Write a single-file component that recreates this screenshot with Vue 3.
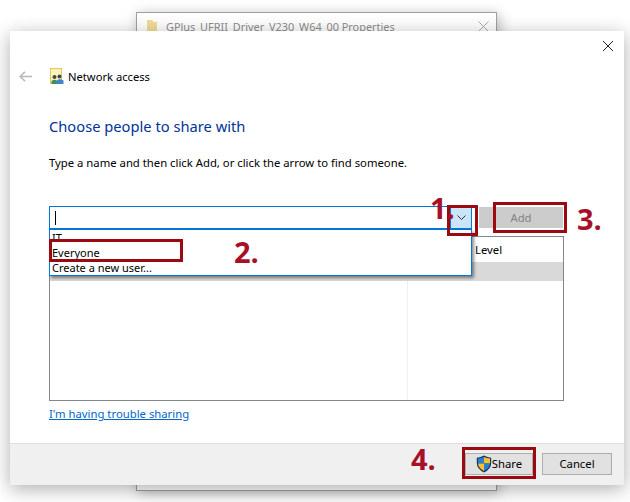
<script setup>
const items = ['IT', 'Everyone', 'Create a new user...']
</script>

<template>
  <div class="desk">
    <div class="backwin">
      <svg class="folder" width="11" height="12" viewBox="0 0 11 12"><path d="M0 0h5l2 2h3v10H0z" fill="#f3dc98"/></svg>
      <span class="backtitle">GPlus_UFRII_Driver_V230_W64_00 Properties</span>
      <svg class="backx" width="11" height="11" viewBox="0 0 11 11"><path d="M.5.5l10 10M10.500.5l-10 10" stroke="#a9a9a9" fill="none"/></svg>
    </div>

    <div class="dialog">
      <div class="closerow">
        <svg width="10" height="10" viewBox="0 0 10 10"><path d="M0 0l10 10M10 0L0 10" stroke="#222" stroke-width="1" fill="none"/></svg>
      </div>
      <div class="content">
        <div class="navrow">
          <svg class="arrow" width="13" height="11" viewBox="0 0 13 11"><path d="M6 .8L1.200 5.500 6 10.200M1.200 5.500H13" stroke="#b9b9b9" stroke-width="1.6" fill="none"/></svg>
          <svg class="netico" width="14" height="16" viewBox="0 0 14 16">
            <rect x=".5" y=".5" width="11" height="15" fill="#fdf3c0" stroke="#e8c84e"/>
            <circle cx="4.500" cy="9" r="2" fill="#4a4a3a"/>
            <circle cx="9.500" cy="8.500" r="2" fill="#3a4a5a"/>
            <path d="M1.500 16v-3q3-2.500 5.500 0V16z" fill="#3f8f5f"/>
            <path d="M6.500 16v-3.500q3.500-2.500 7 0V16z" fill="#3f86c6"/>
          </svg>
          <span class="navtitle">Network access</span>
        </div>
        <h1 class="heading">Choose people to share with</h1>
        <p class="desc">Type a name and then click Add, or click the arrow to find someone.</p>

        <div class="inputrow">
          <div class="combo">
            <div class="field"><i class="caret"></i></div>
            <div class="drop">
              <svg width="9" height="5" viewBox="0 0 9 5"><path d="M.5.500l4 4 4-4" stroke="#333" fill="none"/></svg>
            </div>
            <ul class="menu">
              <li v-for="item in items" :key="item">{{ item }}</li>
            </ul>
          </div>
          <div class="addbtn">Add</div>
        </div>

        <div class="listbox">
          <div class="lhead">
            <div class="colname"></div>
            <div class="collevel">Level</div>
          </div>
          <div class="lrow"></div>
          <div class="lbody"><div class="colname"></div></div>
        </div>

        <a class="trouble">I'm having trouble sharing</a>
      </div>
      <div class="footer">
        <button class="btn share">
          <svg width="16" height="18" viewBox="0 0 16 18">
            <path d="M8 .5q3.500 2 7.200 2.200V8q0 6-7.200 9.500Q.8 14 .8 8V2.700Q4.500 2.500 8 .5z" fill="#17395f"/>
            <path d="M8 2v6.500H2V3.500Q5.500 3.200 8 2z" fill="#2c7fd0"/>
            <path d="M8 2q2.500 1.200 6 1.500v5H8z" fill="#f5c12e"/>
            <path d="M2 8.500h6V16q-5.500-3-6-7.500z" fill="#f5c12e"/>
            <path d="M8 8.500h6q-.5 4.500-6 7.500z" fill="#2c7fd0"/>
          </svg>
          <span>Share</span>
        </button>
        <button class="btn">Cancel</button>
      </div>
    </div>

    <div class="mark m1"></div>
    <div class="mark m2"></div>
    <div class="mark m3"></div>
    <div class="mark m4"></div>
    <span class="num n1">1.</span>
    <span class="num n2">2.</span>
    <span class="num n3">3.</span>
    <span class="num n4">4.</span>
  </div>
</template>

<style>
html, body { margin: 0; background: #fff; }
</style>

<style scoped>
.desk {
  position: relative;
  width: 630px;
  height: 502px;
  overflow: hidden;
  background: #fff;
  font-family: "Noto Sans", "Open Sans", sans-serif;
  font-size: 11.3px;
  color: #000;
}
.backwin {
  position: absolute;
  left: 136px;
  top: 12px;
  width: 361px;
  height: 479px;
  box-sizing: border-box;
  border: 1px solid #a0a0a0;
  background: #fff;
  box-shadow: 2px 2px 12px rgba(0, 0, 0, .28);
}
.folder { position: absolute; left: 10px; top: 7px; }
.backtitle {
  position: absolute;
  left: 29px;
  top: 6px;
  font-size: 10.9px;
  color: #8d8d8d;
  white-space: nowrap;
}
.backx { position: absolute; left: 341px; top: 8px; }

.dialog {
  position: absolute;
  left: 10px;
  top: 31px;
  width: 614px;
  height: 454px;
  background: #fff;
  display: flex;
  flex-direction: column;
  box-shadow: 0 4px 18px rgba(0, 0, 0, .32);
}
.closerow {
  height: 10px;
  padding: 10px 11px 0 0;
  display: flex;
  justify-content: flex-end;
}
.content {
  flex: 1;
  padding: 0 60px 0 9px;
  position: relative;
}
.navrow {
  display: flex;
  align-items: center;
  height: 16px;
  margin-top: 17px;
}
.arrow { margin-right: 18px; }
.netico { margin-right: 5px; }
.navtitle { font-size: 11.2px; margin-left: -1px; }
.heading {
  margin: 32px 0 0 30px;
  font-size: 14.7px;
  line-height: 20px;
  font-weight: 400;
  color: #003399;
}
.desc {
  margin: 19px 0 0 30px;
  line-height: 16px;
  white-space: nowrap;
}
.inputrow {
  display: flex;
  margin: 35px 0 0 30px;
  height: 24px;
}
.combo {
  position: relative;
  display: flex;
  width: 423px;
  box-sizing: border-box;
  border: 1px solid #0078d7;
  border-bottom-width: 2px;
}
.field { flex: 1; display: flex; align-items: center; padding-left: 5px; }
.caret { width: 1px; height: 14px; background: #000; }
.drop {
  width: 20px;
  background: #cce4f7;
  border-left: 1px solid #0078d7;
  display: flex;
  align-items: center;
  justify-content: center;
}
.menu {
  position: absolute;
  left: -1px;
  top: 23px;
  width: 423px;
  height: 46px;
  margin: 0;
  padding: 0 0 0 2px;
  box-sizing: border-box;
  list-style: none;
  background: #fff;
  border: 1px solid #0078d7;
  border-top: 0;
  box-shadow: 2px 2px 3px rgba(0, 0, 0, .45);
  z-index: 2;
  font-size: 11px;
  line-height: 15px;
}
.addbtn {
  margin-left: 7px;
  width: 84px;
  height: 21px;
  margin-top: 1px;
  background: #cccccc;
  color: #838383;
  text-align: center;
  line-height: 21px;
}
.listbox {
  margin: 6px 0 0 30px;
  width: 515px;
  height: 165px;
  box-sizing: border-box;
  border: 1px solid #82878c;
  display: flex;
  flex-direction: column;
}
.lhead { display: flex; height: 25px; }
.colname { width: 357px; border-right: 1px solid #f0f0f0; height: 100%; }
.collevel { padding: 5px 0 0 67px; }
.lrow { height: 19px; background: #d9d9d9; }
.lbody { flex: 1; }
.trouble {
  display: block;
  margin: 5px 0 0 30px;
  width: max-content;
  color: #0066cc;
  text-decoration: underline;
  line-height: 16px;
}
.footer {
  height: 42px;
  background: #f0f0f0;
  border-top: 1px solid #dfdfdf;
  box-sizing: border-box;
  display: flex;
  justify-content: flex-end;
  align-items: flex-start;
  gap: 9px;
  padding: 9px 12px 0 0;
}
.btn {
  width: 70px;
  height: 22px;
  padding: 0 0 1px;
  background: #e1e1e1;
  border: 1px solid #adadad;
  font: inherit;
  color: #000;
  display: flex;
  align-items: center;
  justify-content: center;
}
.share { width: 68px; gap: 0; }
.mark {
  position: absolute;
  box-sizing: border-box;
  border: 3px solid #9b0a10;
  z-index: 3;
}
.m1 { left: 447px; top: 205px; width: 31px; height: 31px; }
.m2 { left: 49px; top: 239px; width: 134px; height: 23px; }
.m3 { left: 493px; top: 202px; width: 74px; height: 31px; }
.m4 { left: 462px; top: 447px; width: 74px; height: 32px; }
.num {
  position: absolute;
  font-family: "Open Sans", sans-serif;
  font-weight: 700;
  font-size: 29px;
  line-height: 32px;
  color: #a8102a;
  z-index: 3;
}
.n1 { left: 430px; top: 192px; }
.n2 { left: 234px; top: 236px; }
.n3 { left: 577px; top: 203px; }
.n4 { left: 411px; top: 443px; }
</style>
